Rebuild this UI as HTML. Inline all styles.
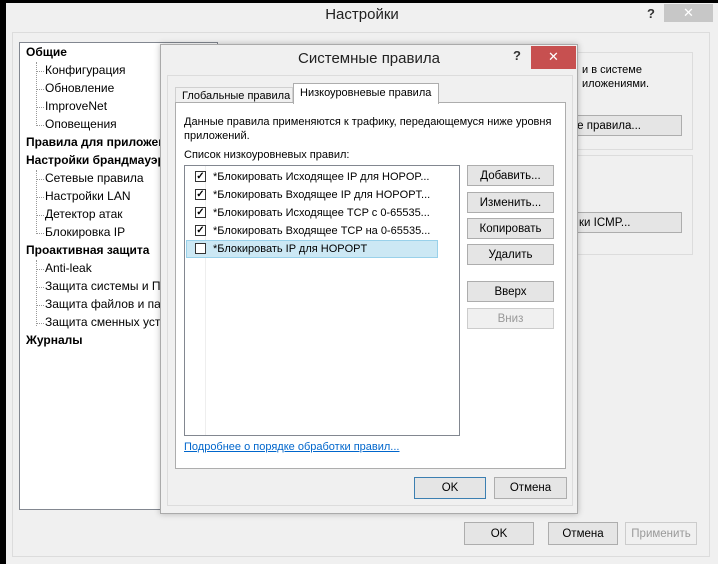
<!DOCTYPE html><html><head><meta charset="utf-8"><style>
*{box-sizing:border-box;margin:0;padding:0}
body{width:718px;height:564px;background:#000;position:relative;overflow:hidden;font-family:"Liberation Sans",sans-serif;font-size:11.5px;color:#000}
.a{position:absolute}
.btn{position:absolute;background:#e5e5e5;border:1px solid #adadad;text-align:center;font-size:11.5px;line-height:20px}
.tree div{position:absolute;white-space:nowrap;font-size:12px}
.b{font-weight:bold}
.h{position:absolute;width:7px;border-top:1px dotted #999;left:37px}
.cb{position:absolute;left:8px;width:11px;height:11px;border:1px solid #333;background:#fff;font-size:10px;line-height:9px;text-align:center;font-weight:bold}
.row{position:absolute;left:2px;width:252px;height:18px;white-space:nowrap;font-size:11px;line-height:18px}
.row span{position:absolute;left:26px}
</style></head><body>
<div class="a" style="left:6px;top:3px;width:712px;height:561px;background:#f0f0f0"></div>
<div class="a" style="left:0;top:6px;width:718px;text-align:center;font-size:15px;color:#222;padding-left:6px">Настройки</div>
<div class="a" style="left:647px;top:6px;font-weight:bold;font-size:13px;color:#333">?</div>
<div class="a" style="left:664px;top:4px;width:49px;height:18px;background:#c7c7c7;color:#fff;text-align:center;line-height:18px;font-size:13px">✕</div>
<div class="a" style="left:12px;top:32px;width:698px;height:525px;border:1px solid #dcdcdc"></div>
<div class="a" style="left:19px;top:42px;width:199px;height:468px;background:#fff;border:1px solid #828790"></div>
<div class="tree">
<div class="b a" style="left:26px;top:45px">Общие</div>
<div class="a" style="left:45px;top:63px">Конфигурация</div>
<div class="a" style="left:45px;top:81px">Обновление</div>
<div class="a" style="left:45px;top:99px">ImproveNet</div>
<div class="a" style="left:45px;top:117px">Оповещения</div>
<div class="b a" style="left:26px;top:135px">Правила для приложений</div>
<div class="b a" style="left:26px;top:153px">Настройки брандмауэра</div>
<div class="a" style="left:45px;top:171px">Сетевые правила</div>
<div class="a" style="left:45px;top:189px">Настройки LAN</div>
<div class="a" style="left:45px;top:207px">Детектор атак</div>
<div class="a" style="left:45px;top:225px">Блокировка IP</div>
<div class="b a" style="left:26px;top:243px">Проактивная защита</div>
<div class="a" style="left:45px;top:261px">Anti-leak</div>
<div class="a" style="left:45px;top:279px">Защита системы и П</div>
<div class="a" style="left:45px;top:297px">Защита файлов и папок</div>
<div class="a" style="left:45px;top:315px">Защита сменных устр</div>
<div class="b a" style="left:26px;top:333px">Журналы</div>
</div>
<div class="a" style="left:36px;top:62px;height:64px;border-left:1px dotted #999"></div>
<div class="a" style="left:36px;top:170px;height:64px;border-left:1px dotted #999"></div>
<div class="a" style="left:36px;top:260px;height:66px;border-left:1px dotted #999"></div>
<div class="h" style="top:71px"></div><div class="h" style="top:89px"></div><div class="h" style="top:107px"></div><div class="h" style="top:125px"></div>
<div class="h" style="top:179px"></div><div class="h" style="top:197px"></div><div class="h" style="top:215px"></div><div class="h" style="top:233px"></div>
<div class="h" style="top:269px"></div><div class="h" style="top:287px"></div><div class="h" style="top:305px"></div><div class="h" style="top:323px"></div>
<div class="a" style="left:577px;top:52px;width:116px;height:98px;border:1px solid #dcdcdc"></div>
<div class="a" style="left:582px;top:63px;font-size:11px;line-height:14px">и в системе<br>иложениями.</div>
<div class="btn" style="left:560px;top:115px;width:122px;height:21px;text-align:right;padding-right:40px">е правила...</div>
<div class="a" style="left:577px;top:155px;width:116px;height:100px;border:1px solid #dcdcdc"></div>
<div class="btn" style="left:560px;top:212px;width:122px;height:21px;text-align:left;padding-left:18px">ки ICMP...</div>
<div class="btn" style="left:464px;top:522px;width:70px;height:23px;line-height:22px">OK</div>
<div class="btn" style="left:548px;top:522px;width:70px;height:23px;line-height:22px">Отмена</div>
<div class="btn" style="left:625px;top:522px;width:72px;height:23px;line-height:22px;color:#999;background:#f0f0f0;border-color:#ccc">Применить</div>
<!-- dialog -->
<div class="a" style="left:160px;top:44px;width:418px;height:470px;background:#f0f0f0;border:1px solid #aaa;box-shadow:0 0 6px rgba(0,0,0,.25)"></div>
<div class="a" style="left:160px;top:50px;width:418px;text-align:center;font-size:15px;color:#222">Системные правила</div>
<div class="a" style="left:513px;top:48px;font-weight:bold;font-size:13px;color:#333">?</div>
<div class="a" style="left:531px;top:46px;width:45px;height:23px;background:#c75050;color:#fff;text-align:center;line-height:22px;font-size:13px">✕</div>
<div class="a" style="left:167px;top:75px;width:406px;height:431px;border:1px solid #dcdcdc"></div>
<div class="a" style="left:175px;top:87px;width:118px;height:16px;border:1px solid #d0d0d0;border-bottom:none;font-size:11px;line-height:16px;padding-left:6px;background:#f0f0f0">Глобальные правила</div>
<div class="a" style="left:175px;top:102px;width:391px;height:367px;background:#fff;border:1px solid #adadad"></div>
<div class="a" style="left:293px;top:83px;width:146px;height:21px;border:1px solid #adadad;border-bottom:none;background:#fff;font-size:11px;line-height:19px;padding-left:6px">Низкоуровневые правила</div>
<div class="a" style="left:184px;top:115px;font-size:11px;line-height:14px;width:380px">Данные правила применяются к трафику, передающемуся ниже уровня приложений.</div>
<div class="a" style="left:184px;top:149px;font-size:11px">Список низкоуровневых правил:</div>
<div class="a" style="left:184px;top:165px;width:276px;height:271px;border:1px solid #828790;background:#fff">
<div class="a" style="left:20px;top:0;height:269px;border-left:1px solid #eee"></div>
<div class="row" style="top:2px"><div class="cb" style="top:3px">✓</div><span>*Блокировать Исходящее IP для HOPOP...</span></div>
<div class="row" style="top:20px"><div class="cb" style="top:3px">✓</div><span>*Блокировать Входящее IP для HOPOPT...</span></div>
<div class="row" style="top:38px"><div class="cb" style="top:3px">✓</div><span>*Блокировать Исходящее TCP с 0-65535...</span></div>
<div class="row" style="top:56px"><div class="cb" style="top:3px">✓</div><span>*Блокировать Входящее TCP на 0-65535...</span></div>
<div class="row" style="top:74px;background:#cce8f4;border:1px solid #99d1ea;height:18px;left:1px"><div class="cb" style="top:2px"></div><span style="line-height:16px">*Блокировать IP для HOPOPT</span></div>
</div>
<div class="btn" style="left:467px;top:165px;width:87px;height:21px">Добавить...</div>
<div class="btn" style="left:467px;top:192px;width:87px;height:21px">Изменить...</div>
<div class="btn" style="left:467px;top:218px;width:87px;height:21px">Копировать</div>
<div class="btn" style="left:467px;top:244px;width:87px;height:21px">Удалить</div>
<div class="btn" style="left:467px;top:281px;width:87px;height:21px">Вверх</div>
<div class="btn" style="left:467px;top:308px;width:87px;height:21px;color:#999;background:#f0f0f0;border-color:#ccc">Вниз</div>
<div class="a" style="left:184px;top:441px;font-size:11px;color:#0066cc;text-decoration:underline">Подробнее о порядке обработки правил...</div>
<div class="btn" style="left:414px;top:477px;width:72px;height:22px;line-height:21px;border-color:#3c7fb1">OK</div>
<div class="btn" style="left:494px;top:477px;width:73px;height:22px;line-height:21px">Отмена</div>
</body></html>
